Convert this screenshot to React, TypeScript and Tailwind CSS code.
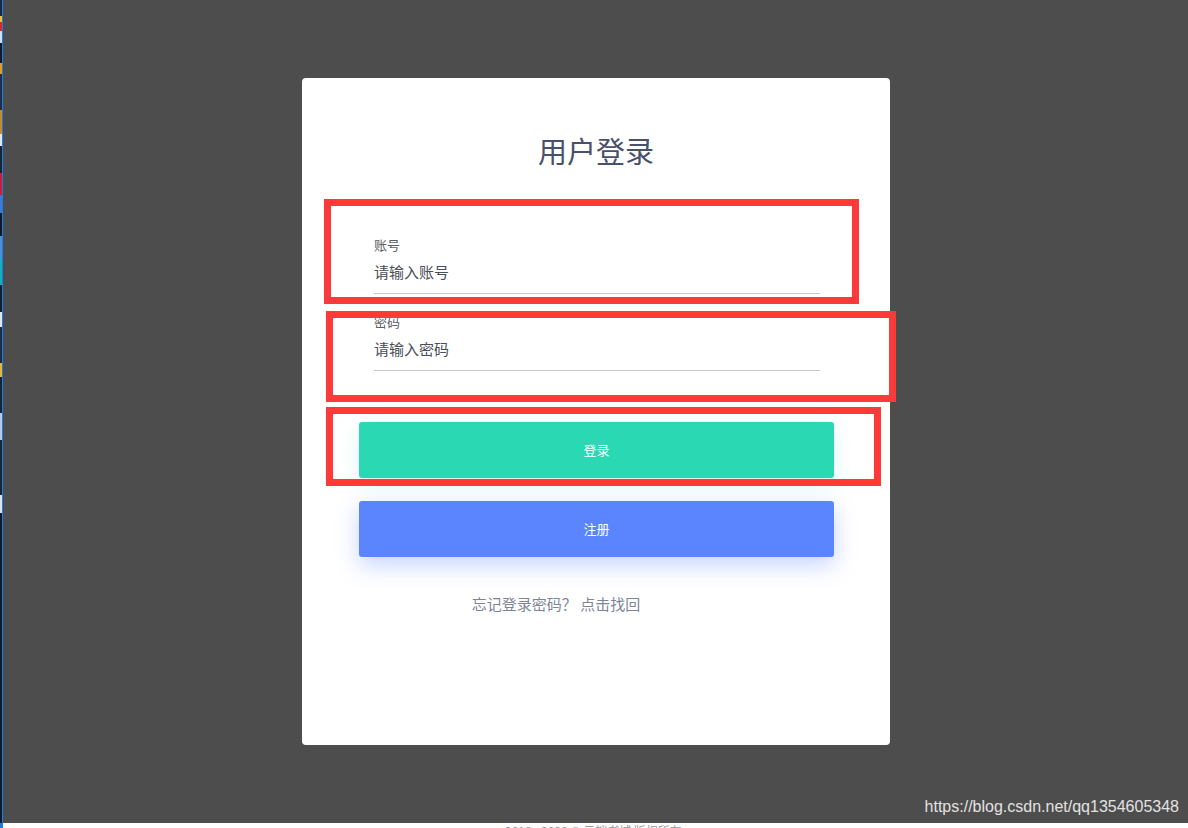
import React from 'react'

const stripColors = [
  'bg-[#1b2a44] h-[18px]',
  'bg-[#e8c23a] h-[6px]',
  'bg-[#d42a2a] h-[10px]',
  'bg-[#cfe0f5] h-[14px]',
  'bg-[#0e1c30] h-[22px]',
  'bg-[#e0a020] h-[12px]',
  'bg-[#1d2f4d] h-[40px]',
  'bg-[#c78a2c] h-[26px]',
  'bg-[#dfe8f2] h-[14px]',
  'bg-[#14243c] h-[30px]',
  'bg-[#c81e3a] h-[24px]',
  'bg-[#3a7bd5] h-[20px]',
  'bg-[#0c1a2e] h-[26px]',
  'bg-[#4a90e2] h-[24px]',
  'bg-[#15b0c0] h-[30px]',
  'bg-[#0f1e33] h-[30px]',
  'bg-[#dfe8f2] h-[16px]',
  'bg-[#1c2c46] h-[40px]',
  'bg-[#e5b83a] h-[16px]',
  'bg-[#14243c] h-[40px]',
  'bg-[#b7cbe6] h-[30px]',
  'bg-[#16263f] h-[60px]',
  'bg-[#d8e4f0] h-[20px]',
  'bg-[#0e1c30] h-[344px]'
]

const Field = ({ label, placeholder, type }: { label: string; placeholder: string; type: string }) => {
  return (
    <div>
      <label className="block h-[18px] text-[13px] leading-[18px] text-[#5a5e66]">{label}</label>
      <input
        type={type}
        placeholder={placeholder}
        className="block h-[40px] w-full border-b border-[#c4c7cf] pb-[5px] text-[15px] text-[#4a4e57] outline-none placeholder:text-[#4a4e57]"
      />
    </div>
  )
}

const App = () => {
  return (
    <div
      className="relative flex h-[828px] w-[1188px] flex-col overflow-hidden bg-white"
      style={{ fontFamily: '"Noto Sans CJK SC", "Noto Sans", sans-serif' }}
    >
      <div className="flex h-[823px]">
        <div className="flex w-[2px] flex-col overflow-hidden">
          {stripColors.map((c, i) => (
            <div key={i} className={c} />
          ))}
        </div>
        <div className="w-px bg-[#1e7be0]" />
        <div className="relative flex-1 bg-[#4d4d4d]">
          <div className="ml-[299px] mt-[78px] flex h-[667px] w-[588px] flex-col rounded-[4px] bg-white">
            <h1 className="pt-[52px] text-center text-[29px] leading-[40px] text-[#48506a]">用户登录</h1>

            <div className="mt-[66px] flex flex-col gap-[19px] pl-[72px] pr-[70px]">
              <Field label="账号" placeholder="请输入账号" type="text" />
              <Field label="密码" placeholder="请输入密码" type="password" />
            </div>

            <div className="mt-[51px] flex flex-col gap-[23px] pl-[57px] pr-[56px]">
              <button className="h-[56px] w-full rounded-[3px] bg-[#2ad8b4] text-[13px] text-white shadow-[0_6px_20px_rgba(42,216,180,0.18)]">
                登录
              </button>
              <button className="h-[56px] w-full rounded-[3px] bg-[#5b85fe] text-[13px] text-white shadow-[0_8px_22px_rgba(91,133,254,0.35)]">
                注册
              </button>
            </div>

            <p className="mt-[37px] pr-[80px] text-center text-[15px] leading-[20px] text-[#7d8696]">
              忘记登录密码？ 点击找回
            </p>
          </div>

          <div
            className="absolute bottom-[4px] right-[9px] text-[16px] text-[#e2e2e2]"
            style={{ fontFamily: '"Liberation Sans", Arial, sans-serif' }}
          >
            https://blog.csdn.net/qq1354605348
          </div>
        </div>
      </div>

      <div className="flex h-[5px] overflow-hidden">
        <div className="w-[3px] bg-[#1e7be0]" />
        <div className="flex-1 pl-[502px] pt-[1px] text-[12px] leading-[14px] text-[#9a9a9a]">
          2018 - 2020 © 云端书城 版权所有
        </div>
      </div>

      {/* red annotation frames */}
      <div className="pointer-events-none absolute left-[324px] top-[199px] h-[105px] w-[535px] border-[7px] border-[#fd3a3a]" />
      <div className="pointer-events-none absolute left-[326px] top-[311px] h-[91px] w-[570px] border-[7px] border-[#fd3a3a]" />
      <div className="pointer-events-none absolute left-[326px] top-[407px] h-[79px] w-[555px] border-[7px] border-[#fd3a3a]" />
    </div>
  )
}

export default App
